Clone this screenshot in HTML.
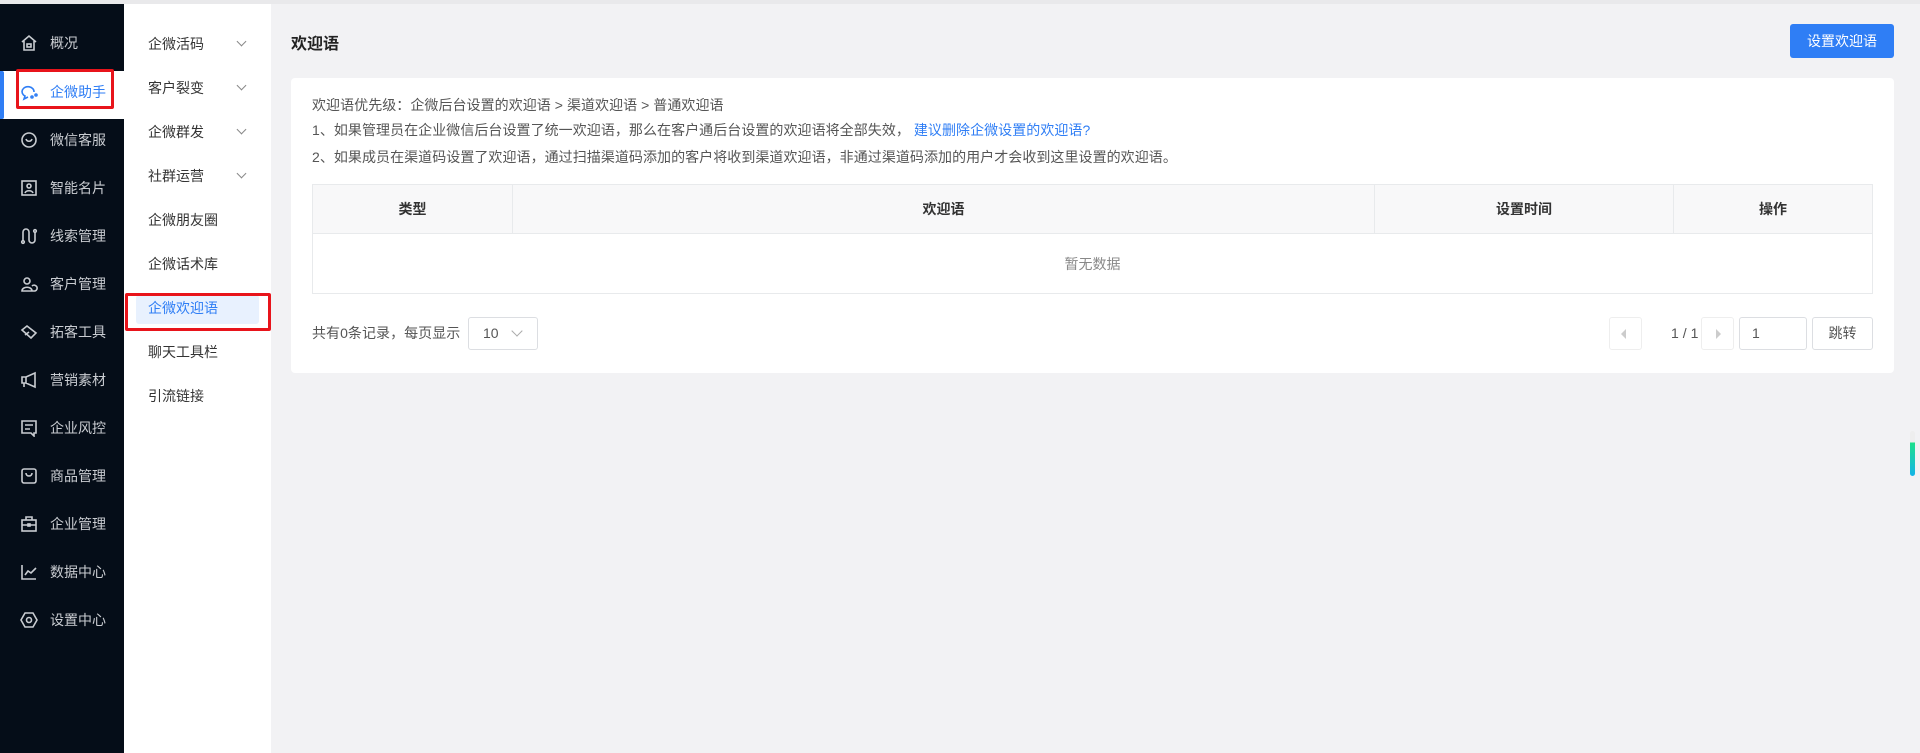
<!DOCTYPE html>
<html><head><meta charset="utf-8"><style>
*{margin:0;padding:0;box-sizing:border-box}
body{width:1920px;height:753px;overflow:hidden;background:#f2f2f4;font-family:"Liberation Sans","Noto Sans CJK SC",sans-serif;position:relative}
.topbar{position:absolute;left:0;top:0;width:1920px;height:4px;background:#e9e9eb}
.side{position:absolute;left:0;top:4px;width:124px;height:749px;background:#050d18}
.si{position:absolute;left:0;width:124px;height:20px;color:#c9ccd1;font-size:14px;line-height:20px}
.si svg{position:absolute;left:20px;top:1px;width:18px;height:18px}
.si span{position:absolute;left:50px;top:0}
.active{position:absolute;left:0;top:67px;width:124px;height:48px;background:#fff}
.active:before{content:"";position:absolute;left:0;top:0;width:4px;height:48px;background:#2f7ef5;border-radius:0 2px 2px 0}
.sub{position:absolute;left:124px;top:4px;width:147px;height:749px;background:#fff}
.mi{position:absolute;left:148px;font-size:14px;color:#333;line-height:20px}
.chev{position:absolute;left:238px;width:7px;height:7px;border-right:1px solid #888;border-bottom:1px solid #888;transform:rotate(45deg)}
.red{position:absolute;border:3px solid #e8141b;border-radius:2px}
h1{position:absolute;left:291px;top:30px;font-size:16px;font-weight:bold;color:#222}
.btn{position:absolute;left:1790px;top:24px;width:104px;height:34px;background:#2f7ef5;border-radius:3px;color:#fff;font-size:14px;text-align:center;line-height:34px}
.card{position:absolute;left:291px;top:78px;width:1603px;height:295px;background:#fff;border-radius:4px}
.ln{position:absolute;left:21px;font-size:14px;letter-spacing:0.05px;color:#555;white-space:nowrap;line-height:20px}
.ln a{color:#2f7ef5;text-decoration:none}
table{position:absolute;left:21px;top:106px;width:1561px;border-collapse:collapse;font-size:14px}
th{height:49px;background:#f8f8f9;border:1px solid #e8eaec;color:#333;font-weight:bold}
td{height:60px;border:1px solid #e8eaec;text-align:center;color:#888}
.pg{position:absolute;top:239px;height:33px;border:1px solid #dcdee2;border-radius:3px;font-size:14px;color:#555;line-height:31px}
</style></head><body>
<div class="topbar"></div>
<div class="side">
<div class="active"></div>
</div>
<div class="sub"></div>

<div class="si" style="top:33px"><svg viewBox="0 0 18 18" fill="none" stroke="#c9ccd1" stroke-width="1.6"><path d="M2 8L9 2l7 6M4 7v9h10V7"/><rect x="7" y="10" width="4" height="3"/></svg><span>概况</span></div>
<div class="si" style="top:82px;color:#2f7ef5"><svg viewBox="0 0 18 18" fill="none" stroke="#2f7ef5" stroke-width="1.6"><path d="M14 9a6 5 0 1 0-9 4l-1 3 4-2"/><circle cx="12" cy="14" r="1"/><circle cx="16" cy="12" r="1"/></svg><span>企微助手</span></div>
<div class="si" style="top:130px"><svg viewBox="0 0 18 18" fill="none" stroke="#c9ccd1" stroke-width="1.6"><circle cx="9" cy="9" r="7"/><path d="M6 8c1 3 5 3 6 0"/></svg><span>微信客服</span></div>
<div class="si" style="top:178px"><svg viewBox="0 0 18 18" fill="none" stroke="#c9ccd1" stroke-width="1.6"><rect x="2" y="2" width="14" height="14"/><circle cx="9" cy="7" r="2"/><path d="M5 14c1-3 7-3 8 0"/></svg><span>智能名片</span></div>
<div class="si" style="top:226px"><svg viewBox="0 0 18 18" fill="none" stroke="#c9ccd1" stroke-width="1.6"><path d="M3 14V5a3 3 0 0 1 6 0v8a3 3 0 0 0 6 0V6"/><circle cx="3" cy="15" r="1.3"/><circle cx="15" cy="4" r="1.3"/></svg><span>线索管理</span></div>
<div class="si" style="top:274px"><svg viewBox="0 0 18 18" fill="none" stroke="#c9ccd1" stroke-width="1.6"><circle cx="7" cy="6" r="3"/><path d="M2 16c0-5 10-5 10 0zM12 11a3 3 0 1 1 3 5h-3"/></svg><span>客户管理</span></div>
<div class="si" style="top:322px"><svg viewBox="0 0 18 18" fill="none" stroke="#c9ccd1" stroke-width="1.6"><path d="M2 7l5-4 9 7-5 5z M5 12l4-3"/></svg><span>拓客工具</span></div>
<div class="si" style="top:370px"><svg viewBox="0 0 18 18" fill="none" stroke="#c9ccd1" stroke-width="1.6"><path d="M2 6h4l9-4v14l-9-4H2zM6 6v6M4 12v4"/></svg><span>营销素材</span></div>
<div class="si" style="top:418px"><svg viewBox="0 0 18 18" fill="none" stroke="#c9ccd1" stroke-width="1.6"><path d="M2 2h14v12h-2v3l-3-3H2z"/><path d="M5 6h8M5 10h5"/></svg><span>企业风控</span></div>
<div class="si" style="top:466px"><svg viewBox="0 0 18 18" fill="none" stroke="#c9ccd1" stroke-width="1.6"><rect x="2" y="2" width="14" height="14" rx="2"/><path d="M6 6c0 4 6 4 6 0"/></svg><span>商品管理</span></div>
<div class="si" style="top:514px"><svg viewBox="0 0 18 18" fill="none" stroke="#c9ccd1" stroke-width="1.6"><rect x="2" y="5" width="14" height="11"/><path d="M6 5V2h6v3M2 10h14"/><rect x="8" y="9" width="2" height="2"/></svg><span>企业管理</span></div>
<div class="si" style="top:562px"><svg viewBox="0 0 18 18" fill="none" stroke="#c9ccd1" stroke-width="1.6"><path d="M2 2v14h14M5 12l3-4 3 2 5-5"/></svg><span>数据中心</span></div>
<div class="si" style="top:610px"><svg viewBox="0 0 18 18" fill="none" stroke="#c9ccd1" stroke-width="1.6"><path d="M5 2h8l4 7-4 7H5L1 9z"/><circle cx="9" cy="9" r="2.5"/></svg><span>设置中心</span></div>
<div class="red" style="left:16px;top:69px;width:98px;height:40px"></div>

<div class="mi" style="top:34px">企微活码</div><div class="chev" style="top:38px"></div>
<div class="mi" style="top:78px">客户裂变</div><div class="chev" style="top:82px"></div>
<div class="mi" style="top:122px">企微群发</div><div class="chev" style="top:126px"></div>
<div class="mi" style="top:166px">社群运营</div><div class="chev" style="top:170px"></div>
<div class="mi" style="top:210px">企微朋友圈</div>
<div class="mi" style="top:254px">企微话术库</div>
<div style="position:absolute;left:136px;top:295px;width:123px;height:29px;background:#e8f1fe;border-radius:3px"></div>
<div class="mi" style="top:298px;color:#2f7ef5">企微欢迎语</div>
<div class="mi" style="top:342px">聊天工具栏</div>
<div class="mi" style="top:386px">引流链接</div>
<div class="red" style="left:125px;top:293px;width:146px;height:38px"></div>

<h1>欢迎语</h1>
<div class="btn">设置欢迎语</div>
<div class="card">
<div class="ln" style="top:17px">欢迎语优先级：企微后台设置的欢迎语 &gt; 渠道欢迎语 &gt; 普通欢迎语</div>
<div class="ln" style="top:42px">1、如果管理员在企业微信后台设置了统一欢迎语，那么在客户通后台设置的欢迎语将全部失效， <a>建议删除企微设置的欢迎语?</a></div>
<div class="ln" style="top:69px">2、如果成员在渠道码设置了欢迎语，通过扫描渠道码添加的客户将收到渠道欢迎语，非通过渠道码添加的用户才会收到这里设置的欢迎语。</div>
<table><tr><th style="width:200px">类型</th><th style="width:862px">欢迎语</th><th style="width:299px">设置时间</th><th>操作</th></tr>
<tr><td colspan="4">暂无数据</td></tr></table>
<div class="ln" style="top:245px">共有0条记录，每页显示</div>
<div class="pg" style="left:177px;width:70px;padding-left:14px">10<span style="position:absolute;left:44px;top:9px;width:8px;height:8px;border-right:1px solid #aaa;border-bottom:1px solid #aaa;transform:rotate(45deg)"></span></div>
<div class="pg" style="left:1318px;width:33px;border-color:#eee"><span style="position:absolute;left:11px;top:11px;border:5px solid transparent;border-right:5px solid #ccc;border-left:0"></span></div>
<div class="ln" style="left:1380px;top:245px">1 / 1</div>
<div class="pg" style="left:1410px;width:33px;border-color:#eee"><span style="position:absolute;left:14px;top:11px;border:5px solid transparent;border-left:5px solid #ccc;border-right:0"></span></div>
<div class="pg" style="left:1448px;width:68px;padding-left:12px">1</div>
<div class="pg" style="left:1521px;width:61px;text-align:center">跳转</div>
</div>
<div style="position:absolute;left:1910px;top:431px;width:5px;height:45px;border-radius:3px;background:linear-gradient(#eee 0,#eee 25%,#1ee08a 25%,#14b4e8)"></div>
</body></html>
